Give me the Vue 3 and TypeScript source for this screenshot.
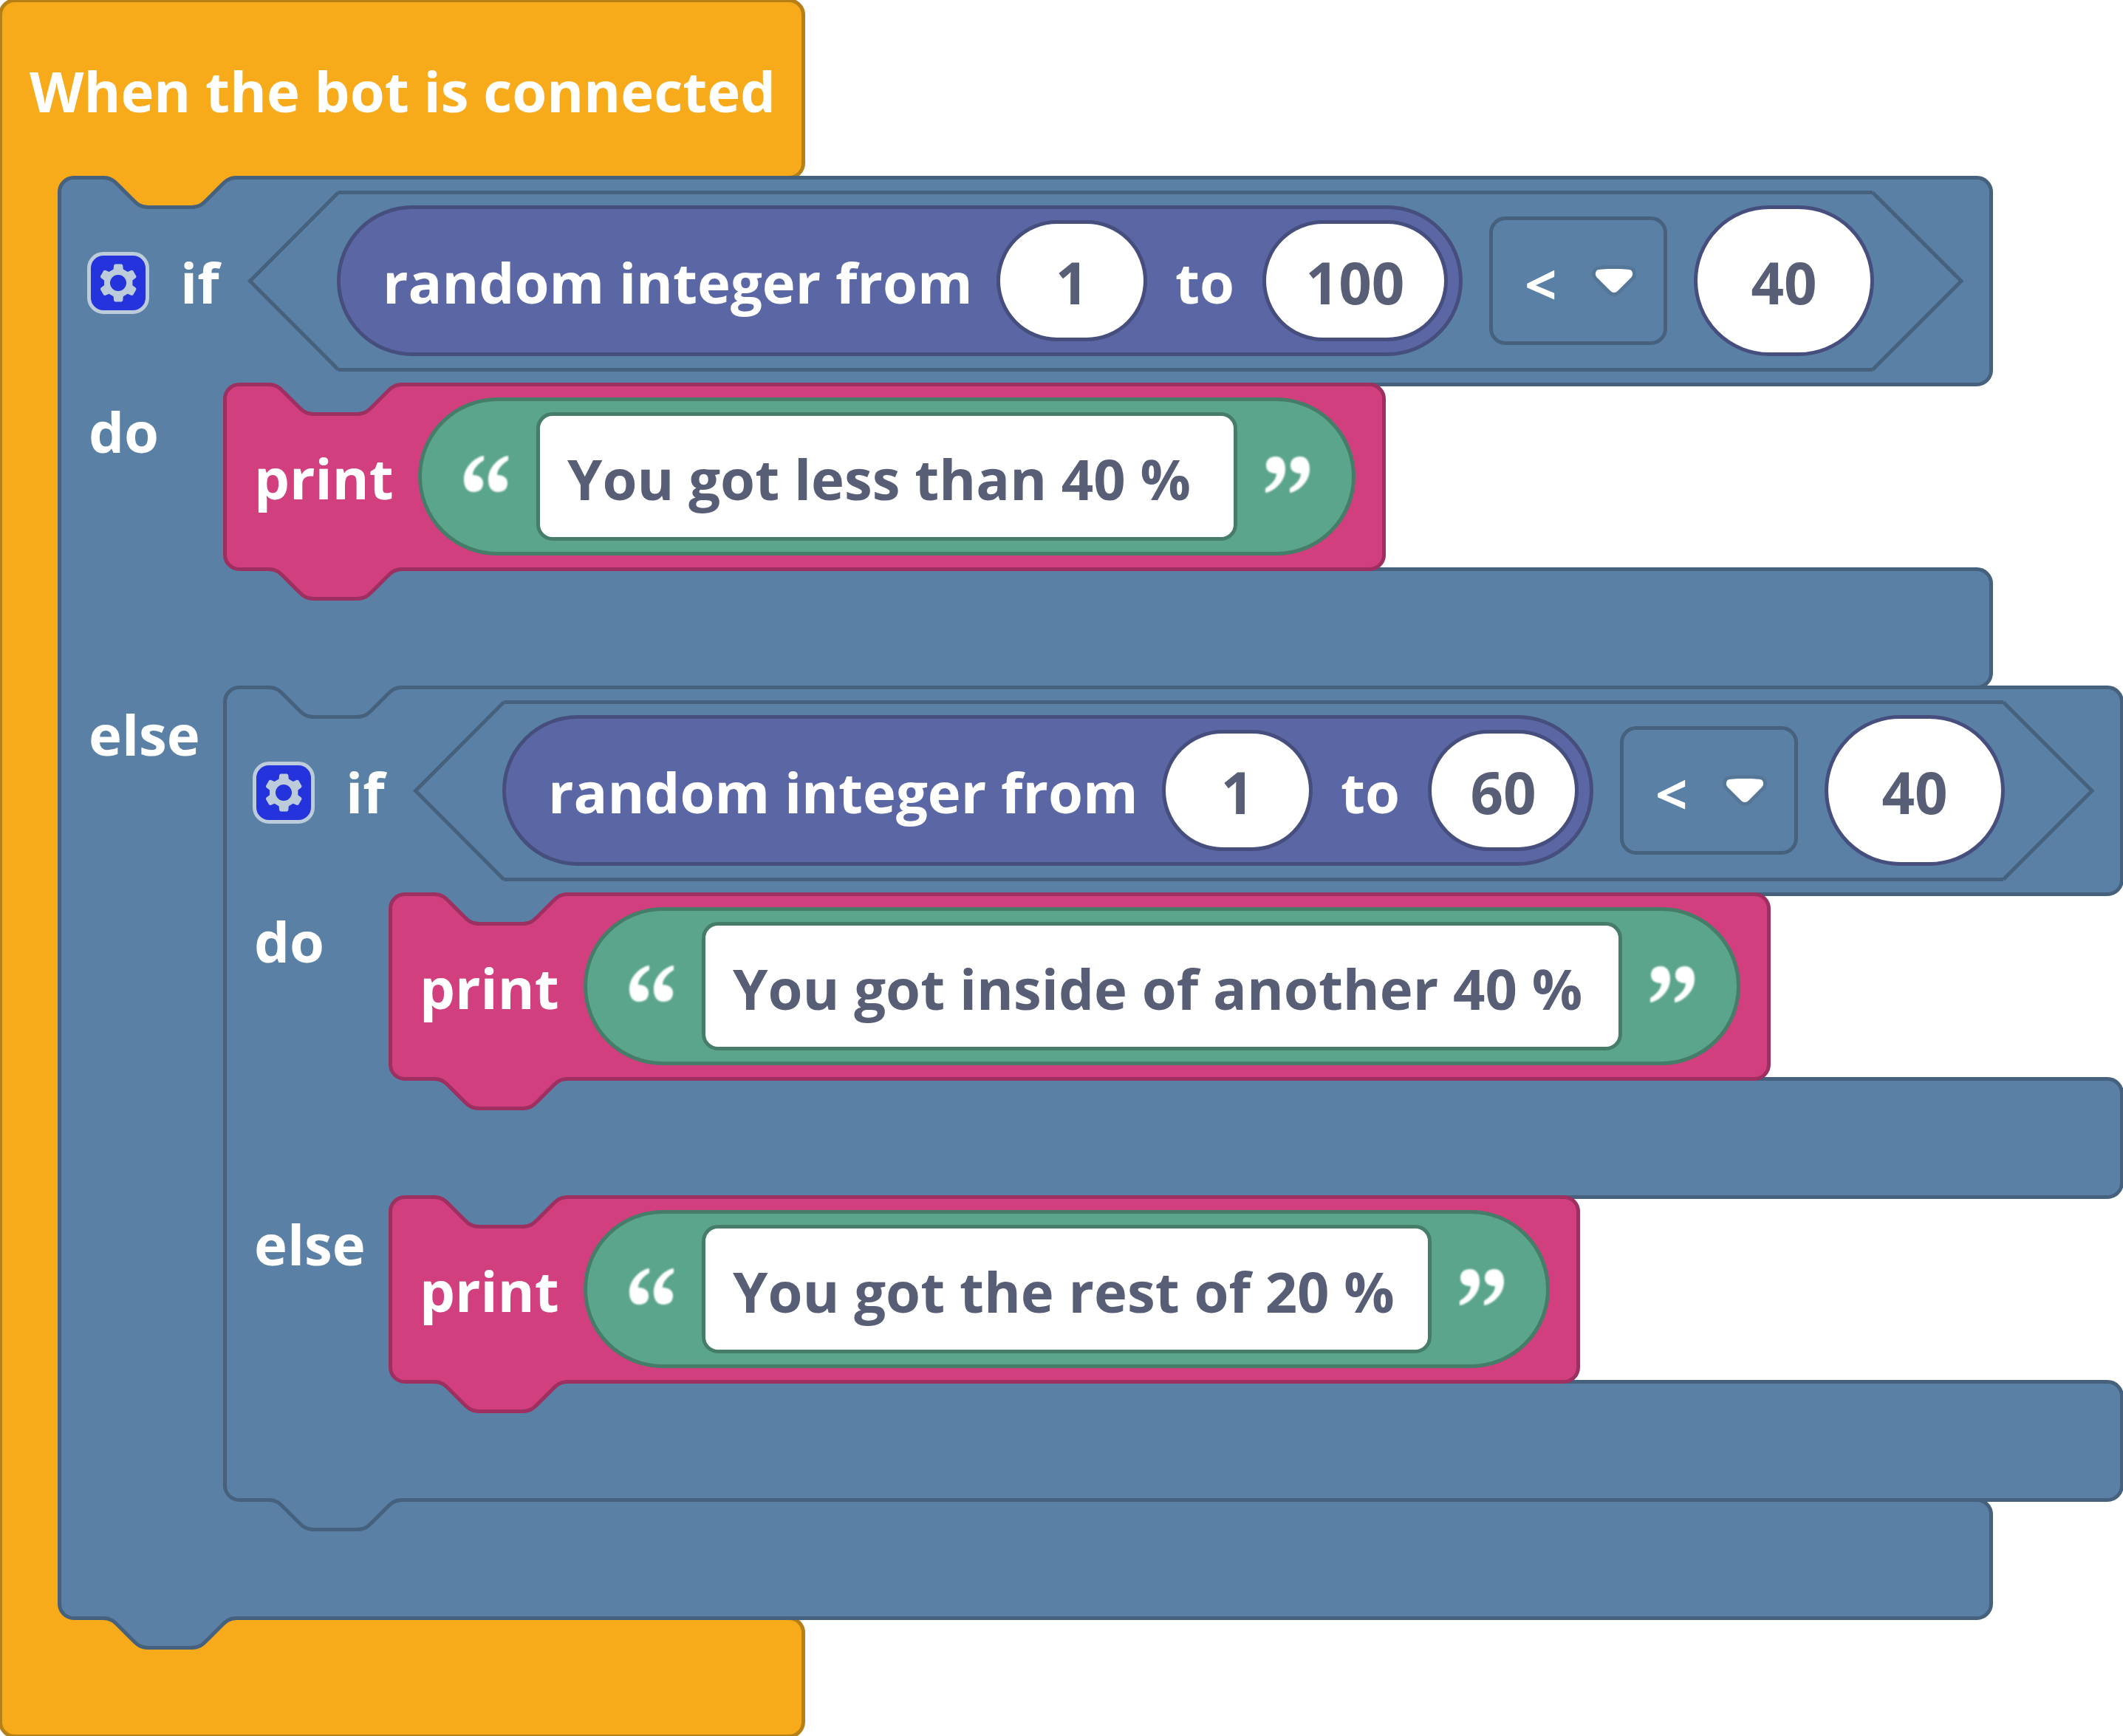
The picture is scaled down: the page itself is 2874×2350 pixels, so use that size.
<script setup lang="ts">
type Operand = { label: string; value: string; width: number }

type Condition = {
  low: Operand
  high: Operand
  operator: string
  right: Operand
}

type Block =
  | { kind: 'event'; label: string; body: Block }
  | { kind: 'if'; condition: Condition; then: Block; otherwise: Block }
  | { kind: 'print'; text: string; width: number }

defineOptions({ name: 'App' })

const props = defineProps<{ block?: Block }>()

const program: Block = {
  kind: 'event',
  label: 'When the bot is connected',
  body: {
    kind: 'if',
    condition: {
      low: { label: 'from', value: '1', width: 200 },
      high: { label: 'to', value: '100', width: 247 },
      operator: '<',
      right: { label: 'compared with', value: '40', width: 240 },
    },
    then: { kind: 'print', text: 'You got less than 40 % ', width: 945 },
    otherwise: {
      kind: 'if',
      condition: {
        low: { label: 'from', value: '1', width: 200 },
        high: { label: 'to', value: '60', width: 200 },
        operator: '<',
        right: { label: 'compared with', value: '40', width: 240 },
      },
      then: { kind: 'print', text: 'You got inside of another 40 %', width: 1242 },
      otherwise: { kind: 'print', text: 'You got the rest of 20 %', width: 984 },
    },
  },
}

const current: Block = props.block ?? program
const isRoot = props.block === undefined
const operators = ['=', '≠', '<', '≤', '>', '≥']

const notchCurve =
  'c10 0 15 5 20 10l20 20c5 5 10 10 20 10h60c10 0 15 -5 20 -10l20 -20c5 -5 10 -10 20 -10'
const gear =
  'm4.203,7.296 0,1.368 -0.92,0.677 -0.11,0.41 0.9,1.559 0.41,0.11 1.043,-0.457 1.187,0.683 0.127,1.134 0.3,0.3 1.8,0 0.3,-0.299 0.127,-1.138 1.185,-0.682 1.046,0.458 0.409,-0.11 0.9,-1.559 -0.11,-0.41 -0.92,-0.677 0,-1.366 0.92,-0.677 0.11,-0.41 -0.9,-1.559 -0.409,-0.109 -1.046,0.458 -1.185,-0.682 -0.127,-1.138 -0.3,-0.299 -1.8,0 -0.3,0.3 -0.126,1.135 -1.187,0.682 -1.043,-0.457 -0.41,0.11 -0.899,1.559 0.108,0.409z'
const quoteMark =
  'M27 2C20 2 0 14 0 34C0 45 5 51 13 51C22 51 26 46 26 39C26 32 21 28 12 28C12 20 19 13 27 8Z'
</script>

<template>
  <component :is="isRoot ? 'main' : 'div'" :class="isRoot ? 'workspace' : 'nested'">
    <section v-if="current.kind === 'event'" class="block event">
      <div class="arm arm-first event-head">
        <span class="text">{{ current.label }}</span>
      </div>
      <div class="slot">
        <div class="spine event-spine"></div>
        <App :block="current.body" />
      </div>
      <div class="arm arm-last"></div>
    </section>

    <section v-else-if="current.kind === 'if'" class="block logic">
      <div class="arm arm-first if-head">
        <button class="mutator" type="button" aria-label="Edit branches">
          <svg viewBox="0 0 16 16" aria-hidden="true">
            <path :d="gear" fill="#bdccdb" />
            <circle cx="8" cy="8" r="2.2" fill="#2533dd" />
          </svg>
        </button>
        <span class="text if-label">if</span>
        <div class="hexagon">
          <svg class="hex-cap" viewBox="0 0 120 240" aria-hidden="true">
            <path d="M120 .5L.5 120.5L120 240.5" />
          </svg>
          <div class="hex-body">
            <div class="random">
              <span class="text random-label">random integer from</span>
              <input
                class="number"
                type="text"
                :aria-label="current.condition.low.label"
                :value="current.condition.low.value"
                :style="{ width: current.condition.low.width + 'px' }"
              />
              <span class="text to-label">to</span>
              <input
                class="number"
                type="text"
                :aria-label="current.condition.high.label"
                :value="current.condition.high.value"
                :style="{ width: current.condition.high.width + 'px' }"
              />
            </div>
            <div class="operator">
              <select aria-label="Comparison" :value="current.condition.operator">
                <option v-for="sign in operators" :key="sign" :value="sign">{{ sign }}</option>
              </select>
              <svg class="arrow" viewBox="0 0 12.71 8.79" aria-hidden="true">
                <path
                  d="M12.71,2.44A2.41,2.41,0,0,1,12,4.16L8.08,8.08a2.45,2.45,0,0,1-3.45,0L.71,4.16A2.42,2.42,0,0,1,0,2.44,2.48,2.48,0,0,1,.71.71C1,.47,1.43,0,6.36,0S11.75.46,12,.71A2.44,2.44,0,0,1,12.71,2.44Z"
                  fill="#231f20"
                  opacity="0.1"
                />
                <path
                  d="M6.36,7.79a1.43,1.43,0,0,1-1-.42L1.42,3.45a1.44,1.44,0,0,1,0-2c.56-.56,9.31-.56,9.87,0a1.44,1.44,0,0,1,0,2L7.37,7.37A1.43,1.43,0,0,1,6.36,7.79Z"
                  fill="#fff"
                />
              </svg>
            </div>
            <input
              class="number number-tall"
              type="text"
              :aria-label="current.condition.right.label"
              :value="current.condition.right.value"
              :style="{ width: current.condition.right.width + 'px' }"
            />
          </div>
          <svg class="hex-cap" viewBox="0 0 120 240" aria-hidden="true">
            <path d="M0 .5L120 120.5L0 240.5" />
          </svg>
        </div>
      </div>
      <div class="slot">
        <div class="spine if-spine"><span class="text branch">do</span></div>
        <App :block="current.then" />
      </div>
      <div class="arm"></div>
      <div class="slot">
        <div class="spine if-spine"><span class="text branch">else</span></div>
        <App :block="current.otherwise" />
      </div>
      <div class="arm arm-last"></div>
      <svg class="notch notch-top" viewBox="0 -5 180 50" aria-hidden="true">
        <path class="notch-fill" :d="'M0 -3V.5' + notchCurve + 'V-3Z'" />
        <path class="notch-line" :d="'M0 .5' + notchCurve" />
      </svg>
      <svg class="notch notch-bottom" viewBox="0 -5 180 50" aria-hidden="true">
        <path class="notch-fill" :d="'M0 -3V.5' + notchCurve + 'V-3Z'" />
        <path class="notch-line" :d="'M0 .5' + notchCurve" />
      </svg>
    </section>

    <section v-else class="block print">
      <div class="arm arm-first arm-last print-row">
        <span class="text print-label">print</span>
        <div class="string">
          <svg class="quote" viewBox="0 0 60 60" aria-hidden="true">
            <path :d="quoteMark" />
            <path :d="quoteMark" transform="translate(33 0)" />
          </svg>
          <input
            class="string-field"
            type="text"
            aria-label="Text to print"
            :value="current.text"
            :style="{ width: current.width + 'px' }"
          />
          <svg class="quote" viewBox="0 0 60 60" aria-hidden="true">
            <g transform="rotate(180 30 27)">
              <path :d="quoteMark" />
              <path :d="quoteMark" transform="translate(33 0)" />
            </g>
          </svg>
        </div>
      </div>
      <svg class="notch notch-top" viewBox="0 -5 180 50" aria-hidden="true">
        <path class="notch-fill" :d="'M0 -3V.5' + notchCurve + 'V-3Z'" />
        <path class="notch-line" :d="'M0 .5' + notchCurve" />
      </svg>
      <svg class="notch notch-bottom" viewBox="0 -5 180 50" aria-hidden="true">
        <path class="notch-fill" :d="'M0 -3V.5' + notchCurve + 'V-3Z'" />
        <path class="notch-line" :d="'M0 .5' + notchCurve" />
      </svg>
    </section>
  </component>
</template>

<style>
body {
  margin: 0;
  background: #fff;
}
</style>

<style scoped>
.workspace {
  overflow: hidden;
  font: 700 76px/100px 'Open Sans', 'Noto Sans', sans-serif;
  color: #fff;
}

/* Each colour pair is inherited by the arms, spines and notches of a block. */
.block {
  position: relative;
  display: grid;
  width: max-content;
}
.event {
  --body: #f7ab1b;
  --edge: #b77f17;
}
.logic {
  --under: #f7ab1b;
  --body: #5b80a5;
  --edge: #46617d;
}
.logic .logic,
.print {
  --under: #5b80a5;
}
.print {
  --body: #d13f7f;
  --edge: #9d3060;
}

/* Strokes straddle the layout edge: 2px outside it and 3px inside. */
.arm {
  box-sizing: border-box;
  min-height: 165px;
  margin: -2px -3px -3px -2px;
  border: 5px solid var(--edge);
  border-radius: 0 22px 22px 0;
  background: var(--body);
}
.arm-first {
  border-top-left-radius: 22px;
}
.arm-last {
  border-bottom-left-radius: 22px;
}
.slot {
  position: relative;
  z-index: 1;
  display: flex;
  width: 0;
}
.nested {
  flex: none;
  position: relative;
}
.spine {
  box-sizing: border-box;
  flex: none;
  margin: -2px -20px -3px -2px;
  border-left: 5px solid var(--edge);
  background: var(--body);
}
.event-spine {
  width: 102px;
}
.if-spine {
  width: 246px;
  padding: 12px 0 0 37px;
}

.text {
  flex: none;
  padding-top: 4px;
  white-space: nowrap;
}
.branch {
  display: block;
}

.event-head {
  display: flex;
  align-items: center;
  width: 1092px;
  height: 245px;
  padding-left: 37px;
}

.if-head {
  display: flex;
  align-items: center;
  height: 285px;
  padding: 0 38px 1px 37px;
}
.mutator {
  box-sizing: border-box;
  flex: none;
  width: 80px;
  height: 80px;
  margin: 5px 44px 0 0;
  padding: 0;
  border: 0;
  border-radius: 20px;
  outline: 5px solid #bdccdb;
  outline-offset: -3px;
  background: #2533dd;
}
.mutator svg {
  display: block;
  width: 80px;
  height: 80px;
}
.if-label {
  width: 94px;
}
.hexagon {
  display: flex;
}
.hex-cap {
  flex: none;
  width: 120px;
  height: 240px;
  overflow: visible;
  fill: none;
  stroke: var(--edge);
  stroke-width: 5;
}
.hex-body {
  box-sizing: border-box;
  display: flex;
  align-items: center;
  gap: 40px;
  height: 245px;
  margin: -2px 0 -3px;
  padding-bottom: 1px;
  border: solid var(--edge);
  border-width: 5px 0;
}

.random {
  display: flex;
  align-items: center;
  height: 200px;
  padding: 0 20px 0 60px;
  border-radius: 100px;
  outline: 5px solid #464e7d;
  outline-offset: -3px;
  background: #5b67a5;
}
.random-label {
  width: 833px;
}
.to-label {
  width: 160px;
  padding-left: 40px;
  box-sizing: border-box;
}
.number,
.string-field,
.operator select {
  box-sizing: border-box;
  flex: none;
  margin: 0;
  border: 0;
  font: inherit;
  outline: 5px solid var(--edge);
  outline-offset: -3px;
}
.number {
  height: 160px;
  padding: 4px 0 0;
  border-radius: 80px;
  outline-color: #464e7d;
  background: #fff;
  color: #575e75;
  font-size: 78px;
  text-align: center;
}
.number-tall {
  height: 200px;
  border-radius: 100px;
}

.operator {
  position: relative;
}
.operator select {
  display: block;
  width: 237px;
  height: 170px;
  padding: 8px 80px 0 46px;
  border-radius: 20px;
  appearance: none;
  background: transparent;
  color: #fff;
}
.operator option {
  color: #575e75;
}
.arrow {
  position: absolute;
  top: 64px;
  right: 40px;
  width: 60px;
  height: 42px;
  pointer-events: none;
}

.print-row {
  display: flex;
  align-items: center;
  height: 255px;
  padding: 0 38px 1px 37px;
}
.print-label {
  width: 224px;
}
.string {
  --edge: #467d69;
  display: flex;
  align-items: center;
  gap: 40px;
  height: 210px;
  padding: 0 60px;
  border-radius: 105px;
  outline: 5px solid var(--edge);
  outline-offset: -3px;
  background: #5ba58c;
}
.string-field {
  height: 170px;
  padding: 4px 0 0 40px;
  border-radius: 20px;
  background: #fff;
  color: #575e75;
}
.quote {
  flex: none;
  width: 60px;
  height: 60px;
  overflow: visible;
  fill: #fff;
  filter: blur(1px);
}

.notch {
  position: absolute;
  left: 60px;
  width: 180px;
  height: 50px;
  overflow: visible;
}
.notch-top {
  top: -5px;
}
.notch-bottom {
  bottom: -45px;
}
.notch-top .notch-fill {
  fill: var(--under);
}
.notch-bottom .notch-fill {
  fill: var(--body);
}
.notch-line {
  fill: none;
  stroke: var(--edge);
  stroke-width: 5;
}
</style>
